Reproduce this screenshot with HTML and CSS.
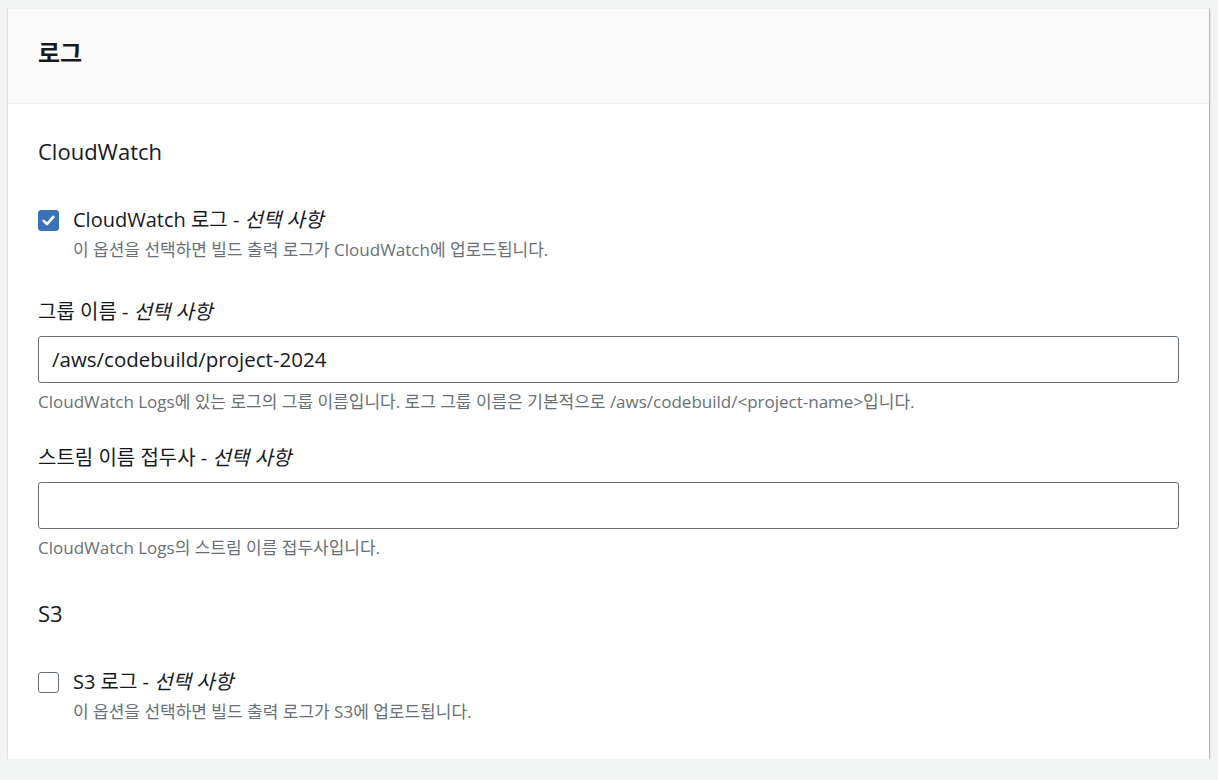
FILE: index.html
```html
<!DOCTYPE html>
<html lang="ko">
<head>
<meta charset="utf-8">
<link rel="stylesheet" href="styles.css">
</head>
<body>
<div class="card">
  <div class="card-header"><h2 class="title">로그</h2></div>
  <div class="card-body">
    <h3 class="section">CloudWatch</h3>
    <div class="check-row">
      <span class="box checked"><svg width="15" height="15" viewBox="0 0 14 14"><path d="M2.5 7.3 L5.6 10.4 L11.5 3.6" fill="none" stroke="#fff" stroke-width="2.4" stroke-linecap="round" stroke-linejoin="round"/></svg></span>
      <div class="check-text">
        <div class="check-label">CloudWatch 로그 - <i>선택 사항</i></div>
        <div class="desc">이 옵션을 선택하면 빌드 출력 로그가 CloudWatch에 업로드됩니다.</div>
      </div>
    </div>
    <div class="field">
      <div class="field-label">그룹 이름 - <i>선택 사항</i></div>
      <div class="input">/aws/codebuild/project-2024</div>
      <div class="hint">CloudWatch Logs에 있는 로그의 그룹 이름입니다. 로그 그룹 이름은 기본적으로 /aws/codebuild/&lt;project-name&gt;입니다.</div>
    </div>
    <div class="field">
      <div class="field-label">스트림 이름 접두사 - <i>선택 사항</i></div>
      <div class="input"></div>
      <div class="hint">CloudWatch Logs의 스트림 이름 접두사입니다.</div>
    </div>
    <h3 class="section s3">S3</h3>
    <div class="check-row">
      <span class="box"></span>
      <div class="check-text">
        <div class="check-label">S3 로그 - <i>선택 사항</i></div>
        <div class="desc">이 옵션을 선택하면 빌드 출력 로그가 S3에 업로드됩니다.</div>
      </div>
    </div>
  </div>
</div>
</body>
</html>
```
FILE: styles.css
```css
html, body {
  margin: 0;
  padding: 0;
  background: #f2f3f3;
}
body {
  padding: 8px 9px 0 8px;
  font-family: "Open Sans", "Noto Sans CJK KR", sans-serif;
  color: #16191f;
}
.card {
  background: #fff;
  border-top: 1px dotted #e1e4e4;
  box-shadow: -1px 0 0 #e0e2e2, 1px 1px 1px rgba(0,22,40,0.25);
}
.card-header {
  background: #fafafa;
  border-bottom: 1px dotted #e1e4e4;
  height: 95px;
  box-sizing: border-box;
  padding: 0 30px;
  display: flex;
  align-items: center;
}
.title {
  margin: 0;
  font-size: 24px;
  font-weight: 700;
  line-height: 1;
  padding-bottom: 6px;
}
.card-body {
  padding: 0 30px 35px;
}
.section {
  margin: 0;
  font-size: 22px;
  font-weight: 400;
  line-height: 28px;
  padding-top: 33px;
}
.check-row {
  display: flex;
  gap: 14px;
  margin-top: 41px;
}
.box {
  width: 21px;
  height: 21px;
  box-sizing: border-box;
  border: 1.5px solid #687078;
  border-radius: 3px;
  margin-top: 4px;
  flex: none;
  display: flex;
  align-items: center;
  justify-content: center;
}
.box.checked {
  background: #3a72b7;
  border-color: #3a72b7;
}
.check-label {
  font-size: 20px;
  line-height: 28px;
}
.desc, .hint {
  font-size: 17px;
  line-height: 24px;
  color: #687078;
}
.desc {
  margin-top: 4px;
}
.field {
  margin-top: 36px;
}
.field-label {
  font-size: 20px;
  line-height: 28px;
}
.input {
  margin-top: 10px;
  height: 47px;
  box-sizing: border-box;
  border: 1px solid #687078;
  border-radius: 3px;
  padding: 0 13px;
  font-size: 20.5px;
  line-height: 45px;
}
.hint {
  margin-top: 7px;
}
.field + .field {
  margin-top: 30px;
}
.s3 {
  padding-top: 39px;
}
```
